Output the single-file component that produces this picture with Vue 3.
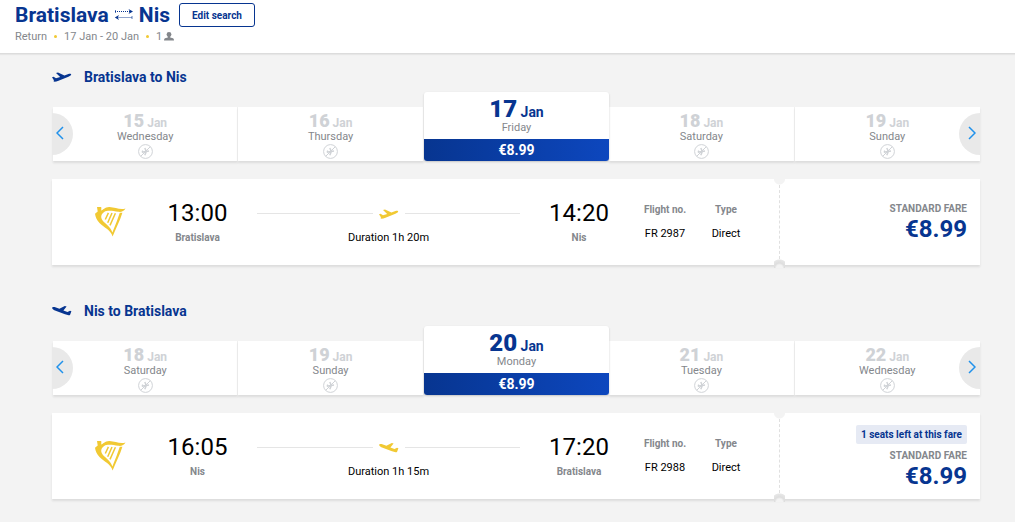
<script setup>
const takeoff = 'M0 5.2 L1.6 4.7 L4 6.2 L8.2 4.9 L4 1 L6 .4 L12.4 3.5 L16.4 2.1 C18 1.6 19.3 1.9 19.2 2.6 C19 3.6 17.6 4.3 16.4 4.8 L6.5 8.8 C4.6 9.6 2.6 9.8 1.6 9.6 L1.9 8.2 Z'
const landing = 'M0 1.8C.3 1 1.9.7 3.3 1.2L7.4 2.7L12.8.1L14.6.6L11.4 4.6L15.5 6L18 4.7L19.4 5.2L18 8.9C16.8 9.5 14.8 9 13 8.3L3 4.5C1.5 3.9.1 3 0 1.8Z'
const legs = [
  {
    id: 'out', from: 'Bratislava', to: 'Nis', plane: takeoff,
    days: [
      { d: 15, name: 'Wednesday' }, { d: 16, name: 'Thursday' },
      { d: 17, name: 'Friday', price: '€8.99' },
      { d: 18, name: 'Saturday' }, { d: 19, name: 'Sunday' },
    ],
    depart: '13:00', arrive: '14:20', duration: '1h 20m', flight: 'FR 2987', fare: '€8.99', seats: '',
  },
  {
    id: 'back', from: 'Nis', to: 'Bratislava', plane: landing,
    days: [
      { d: 18, name: 'Saturday' }, { d: 19, name: 'Sunday' },
      { d: 20, name: 'Monday', price: '€8.99' },
      { d: 21, name: 'Tuesday' }, { d: 22, name: 'Wednesday' },
    ],
    depart: '16:05', arrive: '17:20', duration: '1h 15m', flight: 'FR 2988', fare: '€8.99', seats: '1 seats left at this fare',
  },
]
</script>

<template>
  <div class="page">
    <header class="top">
      <div class="route">
        <h1>Bratislava</h1>
        <svg class="swap" width="20" height="12" viewBox="0 0 20 12" aria-hidden="true">
          <path d="M1 2.5H16" stroke="#073590" stroke-dasharray="1 1" />
          <path d="M14.5 0L19 2.5L14.5 5L15.8 2.5Z" fill="#073590" />
          <path d="M4 8.5H18" stroke="#073590" stroke-opacity=".45" />
          <path d="M5 6L.8 8.5L5 11L3.8 8.5Z" fill="#073590" />
          <path d="M1 1h1v3H1zM17.500 7h1v3h-1z" fill="#073590" fill-opacity=".65" />
        </svg>
        <h1>Nis</h1>
        <button type="button" class="edit">Edit search</button>
      </div>
      <div class="summary">
        <span>Return</span><i class="dot"></i><span>17 Jan - 20 Jan</span><i class="dot"></i>
        <span>1</span>
        <svg class="person" width="10" height="9" viewBox="0 0 10 9" aria-label="passenger">
          <circle cx="5" cy="2.4" r="2.4" /><path d="M3.8 4h2.4v1.4L9 6.3Q10 6.8 10 8.5H0Q0 6.8 1 6.3l2.8-.9z" />
        </svg>
      </div>
    </header>

    <main>
      <section v-for="leg in legs" :key="leg.id" class="leg">
        <h2>
          <svg width="20" height="10" viewBox="0 0 20 10" aria-hidden="true"><path :d="leg.plane" /></svg>
          {{ leg.from }} to {{ leg.to }}
        </h2>

        <div class="calendar">
          <div class="strip">
            <button v-for="day in leg.days" :key="day.d" type="button" class="day" :class="{ active: day.price }">
              <span class="date"><b>{{ day.d }}</b> Jan</span>
              <span class="weekday">{{ day.name }}</span>
              <span v-if="day.price" class="price">{{ day.price }}</span>
              <svg v-else class="none" width="15" height="15" viewBox="0 0 15 15" aria-label="No flights">
                <circle cx="7.5" cy="7.5" r="6.9" /><path d="M2.7 12.3L12.3 2.7" />
                <path class="fly" d="M3.8 8.2L11 7M6.8 4L8.3 7.4L6.8 11.2M4.2 6.6L5 8" />
              </svg>
            </button>
          </div>
          <div class="arrows">
            <button type="button" class="arrow prev" aria-label="Previous dates">
              <svg width="8" height="14" viewBox="0 0 8 14"><path d="M7 1L1 7L7 13" /></svg>
            </button>
            <button type="button" class="arrow next" aria-label="Next dates">
              <svg width="8" height="14" viewBox="0 0 8 14"><path d="M1 1L7 7L1 13" /></svg>
            </button>
          </div>
        </div>

        <article class="ticket">
          <div class="info">
            <svg class="harp" width="31" height="31" viewBox="0 0 31 31" aria-label="Ryanair">
              <path d="M2 .9H6.2L6.4 3.2L5.8 4.4C8 4.4 10 .8 14.5 1C20 1.2 25 4.3 30.5 2.6C29 5.5 26 6.3 23.2 5.8C18 5 12.4 4 9.2 6C6.6 7.8 5.4 10.2 7 13.4C9 17.2 15.4 20 17.4 26.4C19 22 21.5 17 23 11.8L24.8 6.8H27.4C25 15 20.9 22.2 17.6 30.5C15.5 23.4 9.5 22.2 4.5 17C1.7 14 .5 11 0 7.7L2.7 5.4Z" />
              <path class="strings" d="M13.4 6.900L10.300 13.500M17 7L12.700 16.800M20.400 7.300L15 19.400" />
            </svg>
            <div class="stop"><span class="time">{{ leg.depart }}</span><span class="label">{{ leg.from }}</span></div>
            <div class="path">
              <div class="line">
                <svg width="20" height="10" viewBox="0 0 20 10" aria-hidden="true"><path :d="leg.plane" /></svg>
              </div>
              <span>Duration {{ leg.duration }}</span>
            </div>
            <div class="stop"><span class="time">{{ leg.arrive }}</span><span class="label">{{ leg.to }}</span></div>
            <div class="detail"><span class="label">Flight no.</span><span>{{ leg.flight }}</span></div>
            <div class="detail"><span class="label">Type</span><span>Direct</span></div>
          </div>
          <div class="fare">
            <span v-if="leg.seats" class="seats">{{ leg.seats }}</span>
            <span class="label">STANDARD FARE</span>
            <strong>{{ leg.fare }}</strong>
          </div>
        </article>
      </section>
    </main>
  </div>
</template>

<style>
html { background: #f3f3f3; }
</style>

<style scoped>
.page { font-family: Roboto, "Liberation Sans", sans-serif; font-size: 11px; color: #000; background: #f3f3f3; }
button { font-family: inherit; margin: 0; padding: 0; border: 0; background: none; cursor: pointer; }
h1, h2 { margin: 0; color: #073590; font-weight: 700; }
.top { background: #fff; padding: 3px 15px 10px; border-bottom: 1px solid #dcdcdc; box-shadow: 0 1px 1px #e6e6e6; }
.route { display: flex; align-items: center; height: 24px; }
h1 { font-size: 21px; line-height: 24px; }
.swap { margin: 0 5px; }
.edit { margin-left: 9px; box-sizing: border-box; width: 76px; height: 24px; border: 1px solid #073590; border-radius: 3px; color: #073590; font-size: 10px; font-weight: 700; }
.summary { display: flex; align-items: center; margin-top: 2px; height: 14px; color: #84878c; }
.dot { width: 3px; height: 3px; border-radius: 50%; background: #f1c933; margin: 0 7px; }
.person { margin-left: 2px; fill: #84878c; }
main { padding: 15px 35px 0 52px; }
.leg { padding-bottom: 38px; }
h2 { display: flex; align-items: center; gap: 12px; height: 16px; font-size: 14px; line-height: 16px; }
h2 svg { fill: #073590; }
.calendar { position: relative; margin-top: 7px; }
.strip { display: grid; grid-template-columns: repeat(5, minmax(0, 1fr)); align-items: end; padding-left: 1px; }
.day { display: flex; flex-direction: column; align-items: center; height: 54px; box-sizing: border-box; padding-top: 5px; background: #fff; border-right: 1px solid #f0f0f0; color: #cfd2d6; box-shadow: 0 2px 2px #dcdcdc; }
.day:last-child { border-right: 0; }
.date { font-size: 12px; font-weight: 700; line-height: 12px; }
.date b { font-size: 18px; line-height: 18px; }
.weekday { font-size: 11px; line-height: 13px; color: #84878c; }
.none { margin-top: 1px; fill: none; stroke: #d0d3d7; }
.fly { stroke-width: 1.5; }
.active { height: 69px; border: 0; border-radius: 3px; overflow: hidden; color: #073590; box-shadow: 0 1px 2px #c4c4c4; position: relative; }
.active .date { font-size: 14px; line-height: 14px; }
.active .date b { font-size: 24px; line-height: 24px; }
.price { margin-top: auto; width: 100%; line-height: 22px; font-size: 14px; font-weight: 700; color: #fff; background: linear-gradient(90deg, #073590, #0d47be); }
.arrows { position: absolute; left: 0; right: 0; bottom: 6px; display: flex; justify-content: space-between; pointer-events: none; }
.arrow { display: flex; align-items: center; width: 21px; height: 42px; box-sizing: border-box; padding: 0 4px 3px; background: #e9e9e9; pointer-events: auto; }
.prev { border-radius: 0 21px 21px 0; }
.next { border-radius: 21px 0 0 21px; justify-content: flex-end; }
.arrow svg { fill: none; stroke: #2091eb; stroke-width: 1.5; }
.ticket { display: flex; height: 86px; margin-top: 18px; background: #fff; box-shadow: 0 2px 2px #dcdcdc; }
.info { flex: 1; display: grid; grid-template-columns: 86px 119px 1fr 118px 54px 68px; align-items: start; padding-right: 19px; }
.harp { margin: 27px 0 0 43px; fill: #f1c933; }
.strings { fill: none; stroke: #f1c933; stroke-width: 1.5; }
.stop, .path, .detail { display: flex; flex-direction: column; align-items: center; }
.stop { padding-top: 20px; }
.time { font-size: 24px; line-height: 28px; }
.label { color: #84878c; font-size: 10px; font-weight: 700; line-height: 12px; }
.stop .label { margin-top: 5px; }
.path { padding-top: 28px; line-height: 14px; }
.line { display: flex; align-items: center; gap: 6px; width: 100%; height: 12px; margin-bottom: 12px; }
.line::before, .line::after { content: ""; flex: 1; height: 1px; background: #e5e5e5; }
.line svg { fill: #f1c933; margin-top: 2px; }
.detail { padding-top: 25px; line-height: 14px; gap: 11px; }
.fare { position: relative; width: 201px; box-sizing: border-box; padding: 2px 13px 0; display: flex; flex-direction: column; align-items: flex-end; justify-content: center; }
.fare::before { content: ""; position: absolute; left: 0; top: 6px; bottom: 6px; border-left: 1px dashed #e0e0e0; }
.fare::after { content: ""; position: absolute; left: -5px; top: 0; bottom: -3px; width: 11px; background: radial-gradient(circle at 50% 0, #f3f3f3 5px, transparent 6px) top / 11px 6px no-repeat, radial-gradient(circle at 50% 100%, #f3f3f3 3px, #dedede 5px, #e6e6e6 8px, transparent 9px) bottom / 11px 9px no-repeat; }
.seats { margin-bottom: 6px; padding: 0 5px; border-radius: 2px; background: #e6eaf4; color: #073590; font-size: 10px; font-weight: 700; line-height: 19px; }
.fare strong { color: #073590; font-size: 24px; line-height: 28px; }
</style>
